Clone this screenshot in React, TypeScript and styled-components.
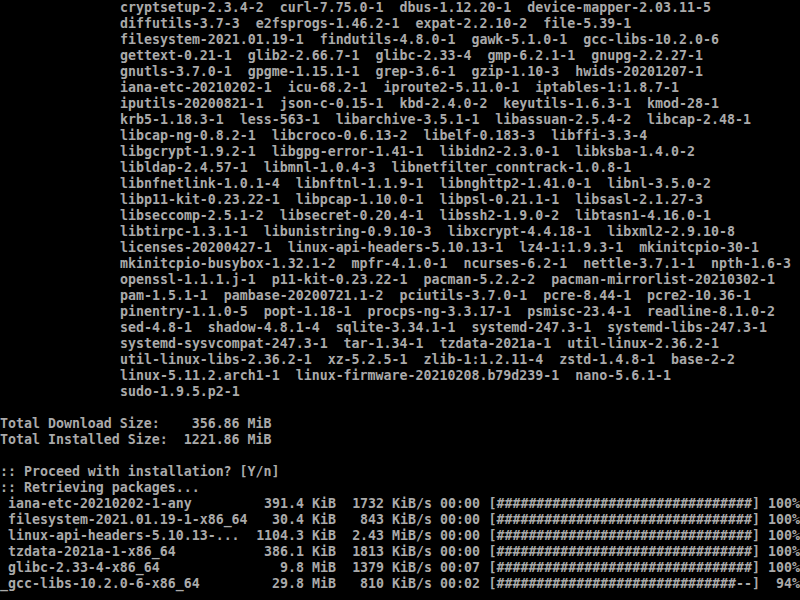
import React from "react";
import styled, { createGlobalStyle } from "styled-components";

const Global = createGlobalStyle`
  html, body {
    margin: 0;
    padding: 0;
    background: #000;
  }
`;

const Screen = styled.div`
  width: 800px;
  height: 600px;
  overflow: hidden;
  background: #000;
  color: #aaaaaa;
  font-family: "DejaVu Sans Mono", "Liberation Mono", monospace;
  font-weight: bold;
  font-size: 13.288px;
  line-height: 16px;
`;

const Line = styled.div<{ $indent?: number }>`
  height: 16px;
  white-space: pre;
  padding-left: ${(p) => (p.$indent ?? 0) * 8}px;
`;

const ProgressRow = styled.div`
  height: 16px;
  display: grid;
  grid-template-columns: 256px 80px 96px 48px 280px 40px;
  white-space: pre;
`;

const Cell = styled.span<{ $right?: boolean }>`
  overflow: hidden;
  text-align: ${(p) => (p.$right ? "right" : "left")};
`;

const Cursor = styled.span`
  display: inline-block;
  width: 8px;
`;

const packages = [
  "cryptsetup-2.3.4-2  curl-7.75.0-1  dbus-1.12.20-1  device-mapper-2.03.11-5",
  "diffutils-3.7-3  e2fsprogs-1.46.2-1  expat-2.2.10-2  file-5.39-1",
  "filesystem-2021.01.19-1  findutils-4.8.0-1  gawk-5.1.0-1  gcc-libs-10.2.0-6",
  "gettext-0.21-1  glib2-2.66.7-1  glibc-2.33-4  gmp-6.2.1-1  gnupg-2.2.27-1",
  "gnutls-3.7.0-1  gpgme-1.15.1-1  grep-3.6-1  gzip-1.10-3  hwids-20201207-1",
  "iana-etc-20210202-1  icu-68.2-1  iproute2-5.11.0-1  iptables-1:1.8.7-1",
  "iputils-20200821-1  json-c-0.15-1  kbd-2.4.0-2  keyutils-1.6.3-1  kmod-28-1",
  "krb5-1.18.3-1  less-563-1  libarchive-3.5.1-1  libassuan-2.5.4-2  libcap-2.48-1",
  "libcap-ng-0.8.2-1  libcroco-0.6.13-2  libelf-0.183-3  libffi-3.3-4",
  "libgcrypt-1.9.2-1  libgpg-error-1.41-1  libidn2-2.3.0-1  libksba-1.4.0-2",
  "libldap-2.4.57-1  libmnl-1.0.4-3  libnetfilter_conntrack-1.0.8-1",
  "libnfnetlink-1.0.1-4  libnftnl-1.1.9-1  libnghttp2-1.41.0-1  libnl-3.5.0-2",
  "libp11-kit-0.23.22-1  libpcap-1.10.0-1  libpsl-0.21.1-1  libsasl-2.1.27-3",
  "libseccomp-2.5.1-2  libsecret-0.20.4-1  libssh2-1.9.0-2  libtasn1-4.16.0-1",
  "libtirpc-1.3.1-1  libunistring-0.9.10-3  libxcrypt-4.4.18-1  libxml2-2.9.10-8",
  "licenses-20200427-1  linux-api-headers-5.10.13-1  lz4-1:1.9.3-1  mkinitcpio-30-1",
  "mkinitcpio-busybox-1.32.1-2  mpfr-4.1.0-1  ncurses-6.2-1  nettle-3.7.1-1  npth-1.6-3",
  "openssl-1.1.1.j-1  p11-kit-0.23.22-1  pacman-5.2.2-2  pacman-mirrorlist-20210302-1",
  "pam-1.5.1-1  pambase-20200721.1-2  pciutils-3.7.0-1  pcre-8.44-1  pcre2-10.36-1",
  "pinentry-1.1.0-5  popt-1.18-1  procps-ng-3.3.17-1  psmisc-23.4-1  readline-8.1.0-2",
  "sed-4.8-1  shadow-4.8.1-4  sqlite-3.34.1-1  systemd-247.3-1  systemd-libs-247.3-1",
  "systemd-sysvcompat-247.3-1  tar-1.34-1  tzdata-2021a-1  util-linux-2.36.2-1",
  "util-linux-libs-2.36.2-1  xz-5.2.5-1  zlib-1:1.2.11-4  zstd-1.4.8-1  base-2-2",
  "linux-5.11.2.arch1-1  linux-firmware-20210208.b79d239-1  nano-5.6.1-1",
  "sudo-1.9.5.p2-1",
];

type Download = {
  name: string;
  size: string;
  rate: string;
  time: string;
  percent: number;
  cursor?: boolean;
};

const downloads: Download[] = [
  { name: "iana-etc-20210202-1-any", size: "391.4 KiB", rate: "1732 KiB/s", time: "00:00", percent: 100 },
  { name: "filesystem-2021.01.19-1-x86_64", size: "30.4 KiB", rate: "843 KiB/s", time: "00:00", percent: 100 },
  { name: "linux-api-headers-5.10.13-...", size: "1104.3 KiB", rate: "2.43 MiB/s", time: "00:00", percent: 100 },
  { name: "tzdata-2021a-1-x86_64", size: "386.1 KiB", rate: "1813 KiB/s", time: "00:00", percent: 100 },
  { name: "glibc-2.33-4-x86_64", size: "9.8 MiB", rate: "1379 KiB/s", time: "00:07", percent: 100 },
  { name: "gcc-libs-10.2.0-6-x86_64", size: "29.8 MiB", rate: "810 KiB/s", time: "00:02", percent: 94, cursor: true },
];

const BAR = 32;

function bar(percent: number) {
  const filled = Math.floor((BAR * percent) / 100);
  return "[" + "#".repeat(filled) + "-".repeat(BAR - filled) + "]";
}

function Progress({ d }: { d: Download }) {
  return (
    <ProgressRow>
      <Cell>
        <Cursor>{d.cursor ? "_" : " "}</Cursor>
        {d.name}
      </Cell>
      <Cell $right>{d.size}</Cell>
      <Cell $right>{d.rate}</Cell>
      <Cell $right>{d.time}</Cell>
      <Cell $right>{bar(d.percent)}</Cell>
      <Cell $right>{d.percent + "%"}</Cell>
    </ProgressRow>
  );
}

export default function App() {
  return (
    <>
      <Global />
      <Screen>
        {packages.map((p, i) => (
          <Line key={i} $indent={15}>
            {p}
          </Line>
        ))}
        <Line />
        <Line>{"Total Download Size:    356.86 MiB"}</Line>
        <Line>{"Total Installed Size:  1221.86 MiB"}</Line>
        <Line />
        <Line>{":: Proceed with installation? [Y/n]"}</Line>
        <Line>{":: Retrieving packages..."}</Line>
        {downloads.map((d, i) => (
          <Progress key={i} d={d} />
        ))}
      </Screen>
    </>
  );
}
